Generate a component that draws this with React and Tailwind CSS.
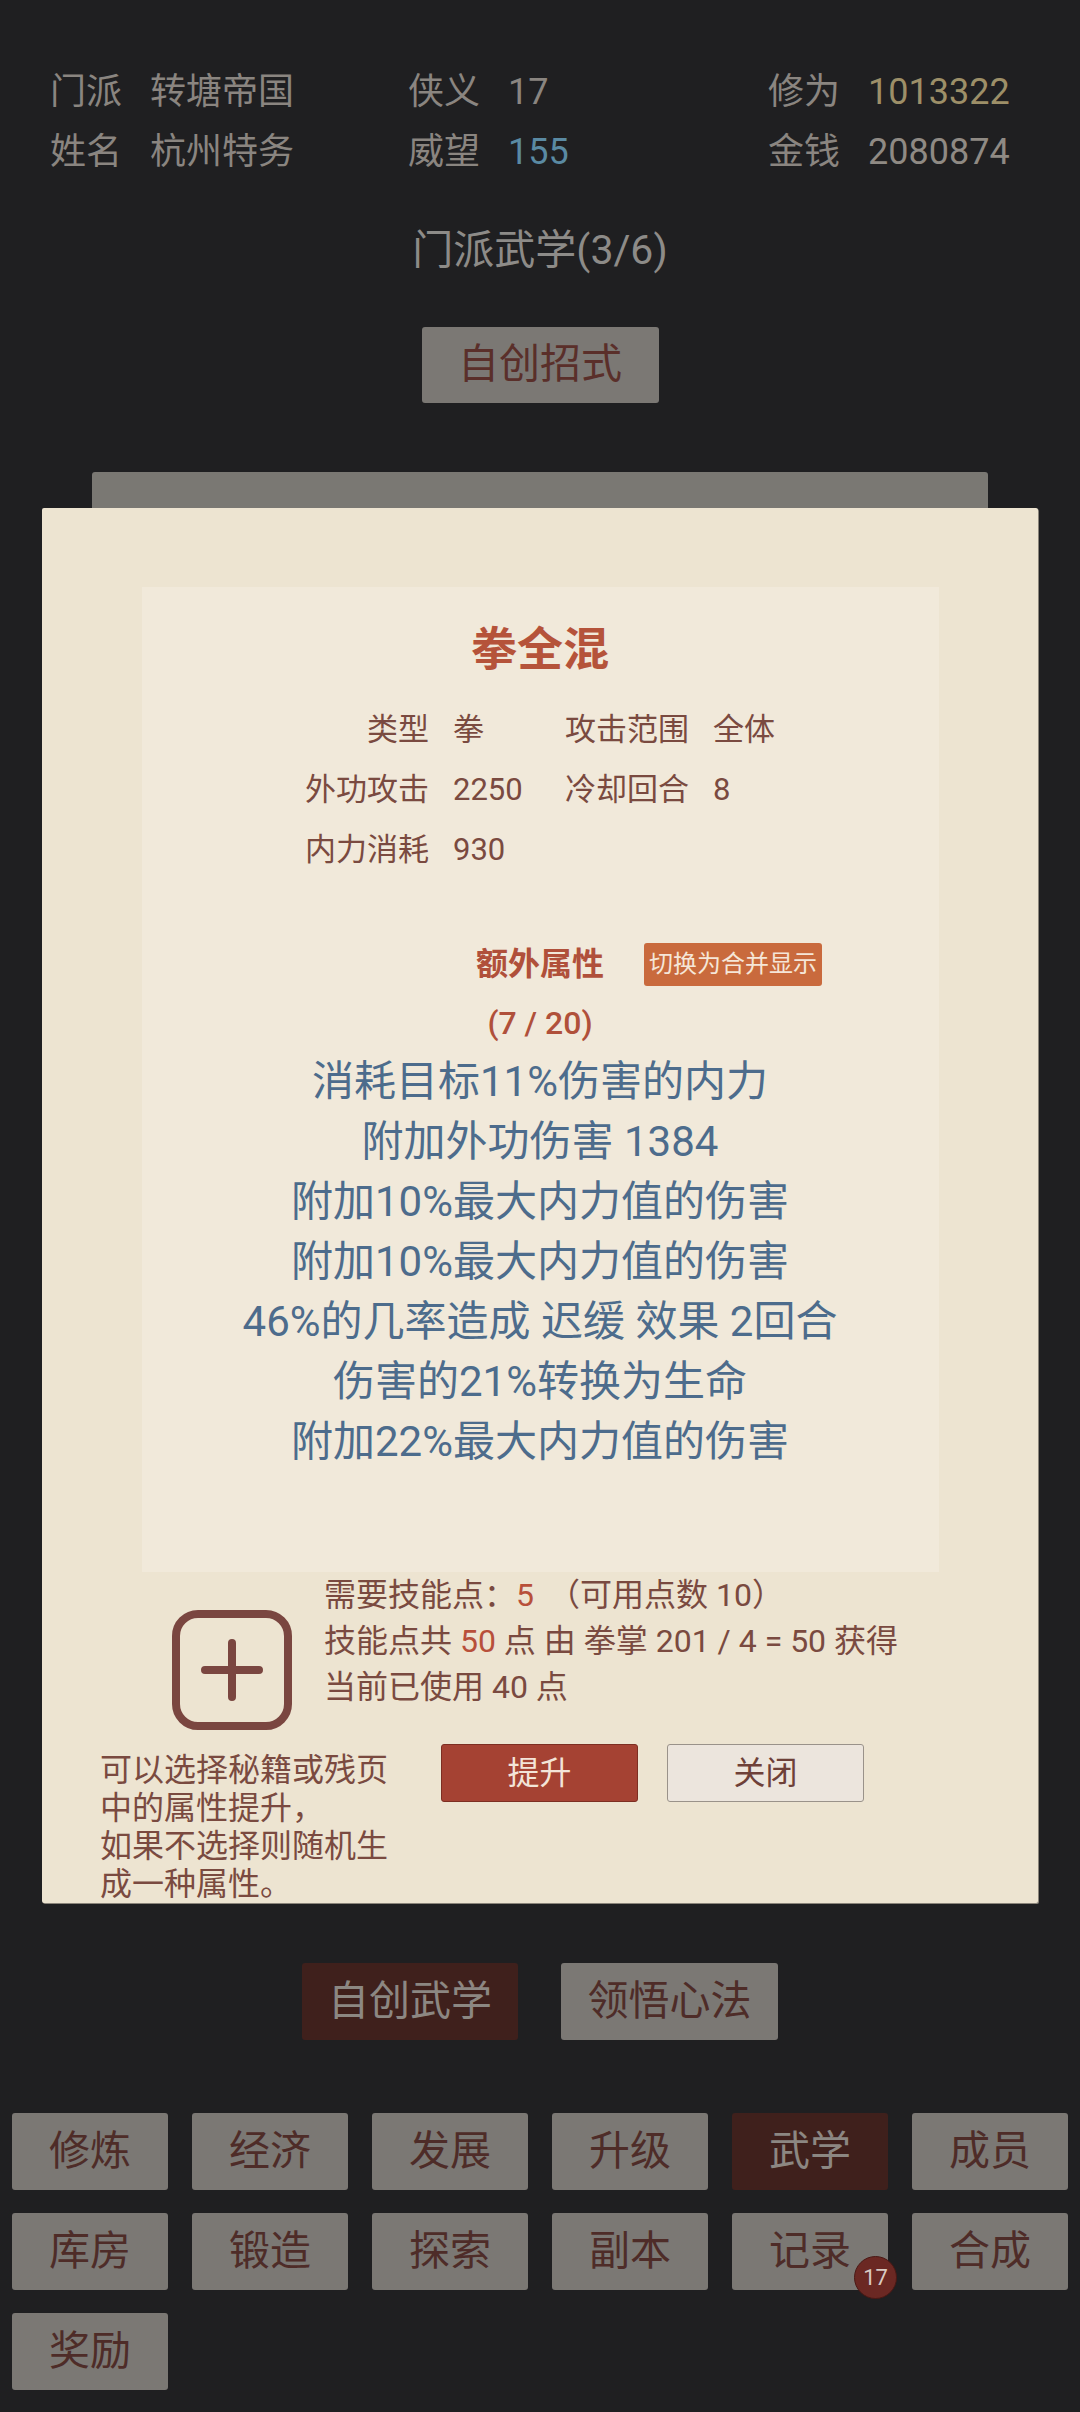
import React from "react";

const statRows = [
  ["类型", "拳", "攻击范围", "全体"],
  ["外功攻击", "2250", "冷却回合", "8"],
  ["内力消耗", "930", "", ""],
];

const effects = [
  "消耗目标11%伤害的内力",
  "附加外功伤害 1384",
  "附加10%最大内力值的伤害",
  "附加10%最大内力值的伤害",
  "46%的几率造成 迟缓 效果 2回合",
  "伤害的21%转换为生命",
  "附加22%最大内力值的伤害",
];

const nav = [
  ["修炼", false],
  ["经济", false],
  ["发展", false],
  ["升级", false],
  ["武学", true],
  ["成员", false],
  ["库房", false],
  ["锻造", false],
  ["探索", false],
  ["副本", false],
  ["记录", false, 17],
  ["合成", false],
  ["奖励", false],
];

function PlusBox() {
  return (
    <svg width="120" height="120" viewBox="0 0 120 120" className="ml-[130px] mt-[38px] shrink-0">
      <rect x="4" y="4" width="112" height="112" rx="22" fill="none" stroke="#7a4640" strokeWidth="8" />
      <path d="M33 60H87M60 33V87" stroke="#7a4640" strokeWidth="8" strokeLinecap="round" />
    </svg>
  );
}

export default function App() {
  return (
    <div className="min-h-[2412px] w-[1080px] bg-[#1f1f21] font-[Roboto,'Noto_Sans_CJK_SC',sans-serif] overflow-hidden">
      {/* header info */}
      <div className="pt-[62px] pl-[50px] grid grid-cols-[358px_360px_auto] text-[36px] leading-[60px] text-[#8a8580]">
        <div className="flex gap-[28px]"><span>门派</span><span>转塘帝国</span></div>
        <div className="flex gap-[28px]"><span>侠义</span><span>17</span></div>
        <div className="flex gap-[28px]"><span>修为</span><span className="text-[#9d8f68]">1013322</span></div>
        <div className="flex gap-[28px]"><span>姓名</span><span>杭州特务</span></div>
        <div className="flex gap-[28px]"><span>威望</span><span className="text-[#5a8aa3]">155</span></div>
        <div className="flex gap-[28px]"><span>金钱</span><span className="text-[#8f8a84]">2080874</span></div>
      </div>

      <div className="mt-[38px] h-[60px] text-center text-[41px] leading-[60px] text-[#8d8b88]">门派武学(3/6)</div>

      <div className="mt-[47px] mx-auto w-[237px] h-[76px] flex items-center justify-center bg-[#7b7874] text-[#5a2f2a] text-[41px] rounded-[3px]">
        自创招式
      </div>

      <div className="mt-[69px] ml-[92px] w-[896px] h-[36px] bg-[#7a7873] rounded-t-[3px]" />

      {/* modal */}
      <div className="ml-[42px] w-[996px] h-[1395px] bg-[#ede4d1] rounded-[2px] pt-[79px] shadow-[1px_1px_0_#8a847a]">
        <div className="mx-auto w-[797px] h-[985px] bg-[#f1e9da] flex flex-col items-center">
          <div className="mt-[32px] h-[60px] leading-[60px] text-[46px] font-bold text-[#b5533a]">拳全混</div>

          <div className="mt-[21px] grid grid-cols-[124px_88px_124px_auto] gap-x-[24px] text-[31px] leading-[60px] text-[#7a4a40]">
            {statRows.map((r, i) => (
              <React.Fragment key={i}>
                <div className="text-right whitespace-nowrap">{r[0]}</div>
                <div className="whitespace-nowrap">{r[1]}</div>
                <div className="text-right whitespace-nowrap">{r[2]}</div>
                <div className="whitespace-nowrap min-w-[62px]">{r[3]}</div>
              </React.Fragment>
            ))}
          </div>

          <div className="mt-[54px] w-full h-[60px] grid grid-cols-[1fr_auto_1fr] items-center">
            <div />
            <div className="text-[32px] font-bold text-[#b0503a] leading-[60px]">额外属性</div>
            <div className="justify-self-start ml-[40px] h-[43px] px-[5px] flex items-center bg-[#c96a3d] text-[#f5e6d8] text-[24px] rounded-[3px] whitespace-nowrap">
              切换为合并显示
            </div>
          </div>

          <div className="h-[58px] leading-[58px] text-[32px] font-medium text-[#b0503a]">(7 / 20)</div>

          <div className="flex flex-col items-center text-[42px] leading-[60px] text-[#4d6c8c]">
            {effects.map((e, i) => (
              <div key={i} className="whitespace-nowrap">{e}</div>
            ))}
          </div>
        </div>

        {/* skill points row */}
        <div className="flex items-start">
          <PlusBox />
          <div className="ml-[32px] text-[32px] leading-[46px] text-[#7a4a40] whitespace-nowrap">
            <div>需要技能点：<span className="text-[#b8503a]">5</span><span className="ml-[14px]">（可用点数 10）</span></div>
            <div>技能点共 <span className="text-[#b8503a]">50</span> 点 由 拳掌 201 / 4 = 50 获得</div>
            <div>当前已使用 40 点</div>
          </div>
        </div>

        <div className="flex items-start">
          <div className="ml-[58px] mt-[21px] w-[290px] text-[32px] leading-[38px] text-[#7a4a40]">
            可以选择秘籍或残页中的属性提升，<br />如果不选择则随机生成一种属性。
          </div>
          <div className="ml-[51px] mt-[14px] flex gap-[29px]">
            <div className="w-[197px] h-[58px] flex items-center justify-center bg-[#a54233] border border-[#7d2e22] rounded-[3px] text-[32px] text-[#f3e4d8]">
              提升
            </div>
            <div className="w-[197px] h-[58px] flex items-center justify-center bg-[#ece5dd] border border-[#9a928a] rounded-[3px] text-[32px] text-[#6e4038]">
              关闭
            </div>
          </div>
        </div>
      </div>

      {/* sub tabs */}
      <div className="mt-[60px] flex justify-center gap-[43px]">
        <div className="w-[216px] h-[77px] flex items-center justify-center bg-[#3f201c] text-[#8c8782] text-[41px] rounded-[3px]">自创武学</div>
        <div className="w-[217px] h-[77px] flex items-center justify-center bg-[#7b7874] text-[#4e2c28] text-[41px] rounded-[3px]">领悟心法</div>
      </div>

      {/* nav grid */}
      <div className="mt-[73px] pl-[12px] grid grid-cols-[repeat(6,156px)] gap-x-[24px] gap-y-[23px]">
        {nav.map(([label, active, badge]) => (
          <div
            key={label}
            className={
              active
                ? "relative h-[77px] flex items-center justify-center bg-[#3f201c] text-[#8c8782] text-[41px] rounded-[3px]"
                : "relative h-[77px] flex items-center justify-center bg-[#7b7874] text-[#4e2c28] text-[41px] rounded-[3px]"
            }
          >
            {label}
            {badge ? (
              <div className="absolute -right-[9px] -bottom-[9px] w-[43px] h-[43px] rounded-full bg-[#6b2823] border border-[#4a1814] flex items-center justify-center text-[22px] text-[#d9cbc3]">
                {badge}
              </div>
            ) : null}
          </div>
        ))}
      </div>
    </div>
  );
}
